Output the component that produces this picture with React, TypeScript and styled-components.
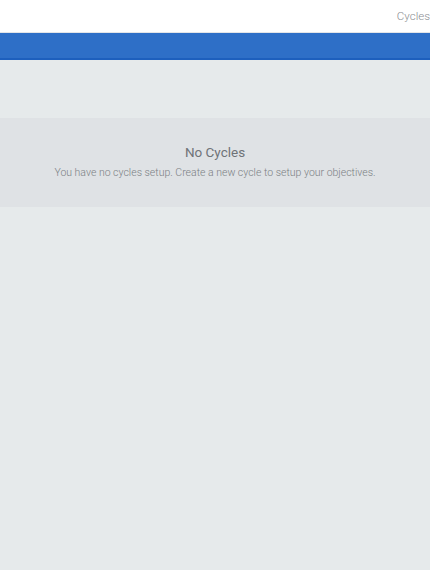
import styled, { createGlobalStyle } from "styled-components";

const Global = createGlobalStyle`
  html, body {
    margin: 0;
    padding: 0;
    background: #e6eaeb;
    font-family: Roboto, "Liberation Sans", Arial, sans-serif;
  }
  #root {
    min-height: 570px;
    overflow: hidden;
  }
`;

const Page = styled.div`
  width: 430px;
  min-height: 570px;
  background: #e6eaeb;
  overflow: hidden;
`;

const TopBar = styled.div`
  height: 32px;
  background: #fff;
  border-bottom: 1px solid #e3e5e8;
  display: flex;
  justify-content: flex-end;
  align-items: center;
  white-space: nowrap;
`;

const NavLink = styled.span`
  font-size: 11.5px;
  font-weight: 300;
  color: #8a8d91;
  margin-right: 0;
`;

const BlueBar = styled.div`
  height: 25px;
  background: #2e6fc7;
  border-bottom: 2px solid #1d5fbd;
`;

const Content = styled.div`
  padding-top: 58px;
`;

const EmptyState = styled.div`
  height: 89px;
  background: #dfe2e5;
  display: flex;
  flex-direction: column;
  align-items: center;
  justify-content: center;
  gap: 6px;
  padding-bottom: 3px;
  box-sizing: border-box;
`;

const EmptyTitle = styled.div`
  font-size: 13.5px;
  font-weight: 400;
  color: #6f7378;
`;

const EmptyText = styled.div`
  font-size: 10.5px;
  font-weight: 300;
  color: #7b7f84;
`;

export default function App() {
  return (
    <Page>
      <Global />
      <TopBar>
        <NavLink>Cycles</NavLink>
      </TopBar>
      <BlueBar />
      <Content>
        <EmptyState>
          <EmptyTitle>No Cycles</EmptyTitle>
          <EmptyText>You have no cycles setup. Create a new cycle to setup your objectives.</EmptyText>
        </EmptyState>
      </Content>
    </Page>
  );
}
